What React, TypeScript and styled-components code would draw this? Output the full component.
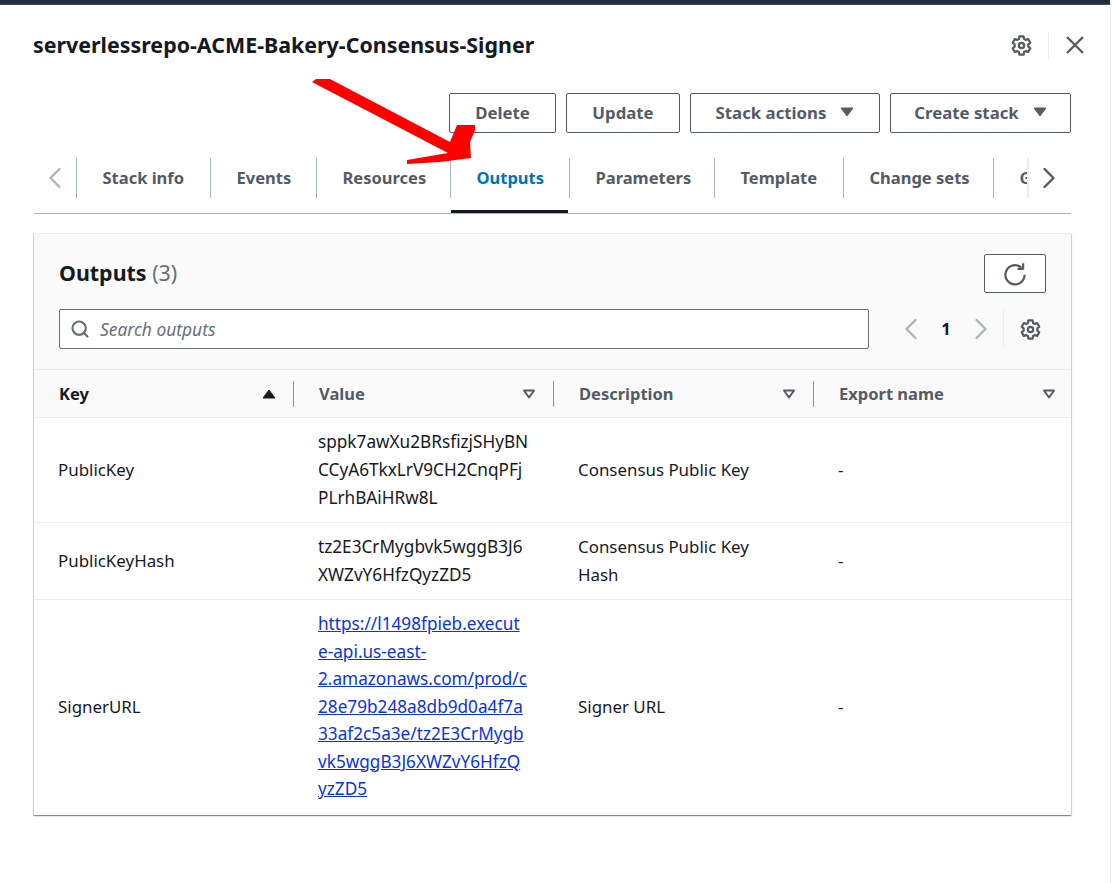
import React from "react";
import styled, { createGlobalStyle } from "styled-components";
import { ChevronLeft, ChevronRight, Search } from "lucide-react";

const GlobalStyle = createGlobalStyle`
  body {
    margin: 0;
    background: #fff;
    font-family: "Noto Sans", "Open Sans", sans-serif;
    color: #16191f;
  }
`;

const Page = styled.div`
  position: relative;
  width: 1111px;
  height: 883px;
  box-sizing: border-box;
  border-right: 1px solid #eaeded;
  overflow: hidden;
`;

const TopBar = styled.div`
  height: 4px;
  background: #232f3e;
  border-bottom: 1px solid #414d5c;
`;

const Drawer = styled.div`
  padding: 0 39px 0 34px;
`;

const Header = styled.div`
  display: flex;
  align-items: center;
  justify-content: space-between;
  height: 80px;
`;

const Title = styled.h1`
  margin: 0 0 0 -1px;
  font-size: 21.4px;
  font-weight: 700;
  line-height: 28px;
  white-space: nowrap;
`;

const HeaderTools = styled.div`
  display: flex;
  align-items: center;
  margin-right: -14px;
  color: #545b64;
`;

const HeaderDivider = styled.div`
  width: 1px;
  height: 28px;
  margin: 0 16px;
  background: #eaeded;
`;

const Actions = styled.div`
  display: flex;
  justify-content: flex-end;
  gap: 10px;
  margin-top: 8px;
`;

const Button = styled.button<{ $width: number }>`
  display: flex;
  align-items: center;
  justify-content: center;
  gap: 14px;
  width: ${(p) => p.$width}px;
  height: 40px;
  padding: 0 0 2px;
  background: #fff;
  border: 1px solid #545b64;
  border-radius: 2px;
  color: #545b64;
  font-family: inherit;
  font-size: 16.8px;
  font-weight: 700;
`;

const TabBar = styled.div`
  display: flex;
  align-items: flex-start;
  height: 55px;
  margin-top: 25px;
  border-bottom: 1px solid #aab7b8;
`;

const TabArrow = styled.div<{ $width: number; $next?: boolean }>`
  display: flex;
  justify-content: center;
  align-items: center;
  flex: none;
  box-sizing: border-box;
  width: ${(p) => p.$width}px;
  height: 40px;
  padding-right: ${(p) => (p.$next ? 2 : 0)}px;
  border-left: ${(p) => (p.$next ? "2px solid #ececec" : "none")};
`;

const TabList = styled.div`
  display: flex;
  flex: 1;
  min-width: 0;
  overflow: hidden;
`;

const Tab = styled.div<{ $active?: boolean; $width: number }>`
  position: relative;
  flex: none;
  box-sizing: border-box;
  width: ${(p) => p.$width}px;
  height: 55px;
  &::after {
    content: "";
    display: ${(p) => (p.$active ? "block" : "none")};
    position: absolute;
    left: 1px;
    right: 1px;
    bottom: 0;
    height: 3px;
    background: #16191f;
  }
`;

const TabLabel = styled.div<{ $active?: boolean }>`
  display: flex;
  align-items: center;
  box-sizing: border-box;
  height: 40px;
  padding: 0 0 2px 25.5px;
  border-left: 1px solid #aab7b8;
  color: ${(p) => (p.$active ? "#0073bb" : "#545b64")};
  font-size: 16.5px;
  font-weight: 700;
  white-space: nowrap;
`;

const Panel = styled.section`
  margin-top: 19px;
  border-top: 1px solid #eaeded;
  box-shadow: 0 1px 1px 0 rgba(0, 28, 36, 0.3),
    1px 1px 1px 0 rgba(0, 28, 36, 0.15), -1px 1px 1px 0 rgba(0, 28, 36, 0.15);
`;

const PanelHead = styled.div`
  display: flex;
  flex-direction: column;
  gap: 16px;
  padding: 20px 25px;
  background: #fafafa;
  border-bottom: 1px solid #eaeded;
`;

const HeadRow = styled.div`
  display: flex;
  align-items: center;
  justify-content: space-between;
`;

const PanelTitle = styled.h2`
  margin: 0;
  padding-bottom: 2px;
  font-size: 21.4px;
  font-weight: 700;
  line-height: 28px;
`;

const Counter = styled.span`
  color: #687078;
  font-weight: 400;
`;

const RefreshButton = styled.button`
  display: flex;
  align-items: center;
  justify-content: center;
  width: 62px;
  height: 39px;
  padding: 0;
  background: #fff;
  border: 1px solid #545b64;
  border-radius: 2px;
  color: #545b64;
`;

const SearchBox = styled.div`
  display: flex;
  align-items: center;
  gap: 10px;
  width: 810px;
  height: 40px;
  box-sizing: border-box;
  padding: 0 10px;
  background: #fff;
  border: 1px solid #687078;
  border-radius: 2px;
  color: #687078;
`;

const SearchText = styled.span`
  padding-bottom: 1px;
  font-size: 17.4px;
  font-style: italic;
  color: #687078;
`;

const Pager = styled.div`
  display: flex;
  align-items: center;
  height: 40px;
`;

const PagerNumber = styled.span`
  width: 34px;
  padding-bottom: 1px;
  text-align: center;
  font-size: 16.5px;
  font-weight: 700;
`;

const PagerDivider = styled.div`
  width: 1px;
  height: 40px;
  margin: 0 16px 0 4px;
  background: #eaeded;
`;

const PagerGear = styled.span`
  display: flex;
  margin-right: 5px;
  color: #545b64;
`;

const Table = styled.table`
  width: 100%;
  table-layout: fixed;
  border-collapse: collapse;
`;

const HeadCell = styled.th`
  height: 47px;
  padding: 0;
  background: #fafafa;
  border-bottom: 1px solid #eaeded;
  text-align: left;
  &:not(:last-child) {
    width: 260px;
  }
`;

const HeadInner = styled.div<{ $last?: boolean; $sorted?: boolean }>`
  display: flex;
  align-items: center;
  justify-content: space-between;
  height: 26px;
  padding: 0 ${(p) => (p.$last ? 14 : 17)}px 0 25px;
  border-right: 1px solid ${(p) => (p.$last ? "transparent" : "#879596")};
  color: ${(p) => (p.$sorted ? "#16191f" : "#545b64")};
  font-size: 16.5px;
  font-weight: 700;
`;

const Cell = styled.td`
  padding: 10px 26px 10px 24px;
  border-bottom: 1px solid #eaeded;
  font-size: 16.9px;
  line-height: 28px;
  color: #16191f;
  tr:last-child & {
    border-bottom: none;
  }
`;

const ValueCell = styled(Cell)`
  font-size: 17.2px;
`;

const ValueLink = styled.a`
  display: block;
  margin-bottom: 2px;
  line-height: 27.5px;
  color: #0a32e6;
  text-decoration: underline;
  white-space: nowrap;
`;

const ArrowOverlay = styled.svg`
  position: absolute;
  left: 300px;
  top: 70px;
  pointer-events: none;
`;

const Gear = () => (
  <svg width="21" height="21" viewBox="0 0 16 16" fill="none" stroke="currentColor" strokeWidth="1.7" strokeLinejoin="round">
    <path d="M6.4 1.1h3.2l.4 1.9 1.2.7 1.9-.6 1.6 2.8-1.5 1.3v1.6l1.5 1.3-1.6 2.8-1.9-.6-1.2.7-.4 1.9H6.4L6 13l-1.2-.7-1.9.6-1.6-2.8 1.5-1.3V7.2L1.3 5.9l1.6-2.8 1.9.6L6 3z" />
    <circle cx="8" cy="8" r="2" />
  </svg>
);

const Close = () => (
  <svg width="20" height="20" viewBox="0 0 20 20" fill="none" stroke="currentColor" strokeWidth="2.4">
    <path d="M2 2l16 16M18 2L2 18" />
  </svg>
);

const Refresh = () => (
  <svg width="24" height="24" viewBox="0 0 16 16" fill="none" stroke="currentColor" strokeWidth="1.5">
    <path d="M14.4 8.5A6.4 6.4 0 1 1 12.2 3.7" />
    <path d="M13.4 .8v3.7H9.7" strokeLinejoin="round" />
  </svg>
);

const CaretDown = () => (
  <svg width="14" height="10" viewBox="0 0 14 10">
    <path d="M1 1h12L7 9z" fill="currentColor" stroke="currentColor" strokeLinejoin="round" />
  </svg>
);

const SortIcon = ({ sorted }: { sorted?: boolean }) =>
  sorted ? (
    <svg width="14" height="10" viewBox="0 0 14 10" color="#16191f">
      <path d="M1 9h12L7 1z" fill="currentColor" stroke="currentColor" strokeLinejoin="round" />
    </svg>
  ) : (
    <svg width="14" height="10" viewBox="0 0 14 10" color="#545b64">
      <path d="M2 1.5h10L7 8.5z" fill="none" stroke="currentColor" strokeWidth="2" strokeLinejoin="round" />
    </svg>
  );

const tabs = [
  { label: "Stack info", width: 134 },
  { label: "Events", width: 106 },
  { label: "Resources", width: 134 },
  { label: "Outputs", width: 119 },
  { label: "Parameters", width: 145 },
  { label: "Template", width: 129 },
  { label: "Change sets", width: 150 },
  { label: "Git sync", width: 110 },
];
const columns = ["Key", "Value", "Description", "Export name"];

const rows = [
  {
    key: "PublicKey",
    value: ["sppk7awXu2BRsfizjSHyBN", "CCyA6TkxLrV9CH2CnqPFj", "PLrhBAiHRw8L"],
    description: "Consensus Public Key",
  },
  {
    key: "PublicKeyHash",
    value: ["tz2E3CrMygbvk5wggB3J6", "XWZvY6HfzQyzZD5"],
    description: "Consensus Public Key Hash",
  },
  {
    key: "SignerURL",
    value: [
      "https://l1498fpieb.execut",
      "e-api.us-east-",
      "2.amazonaws.com/prod/c",
      "28e79b248a8db9d0a4f7a",
      "33af2c5a3e/tz2E3CrMygb",
      "vk5wggB3J6XWZvY6HfzQ",
      "yzZD5",
    ],
    description: "Signer URL",
    link: true,
  },
];

const Lines = ({ lines }: { lines: string[] }) => (
  <>
    {lines.map((line, i) => (
      <React.Fragment key={line}>
        {i > 0 && <br />}
        {line}
      </React.Fragment>
    ))}
  </>
);

const App = () => {
  return (
    <Page>
      <GlobalStyle />
      <TopBar />
      <Drawer>
        <Header>
          <Title>serverlessrepo-ACME-Bakery-Consensus-Signer</Title>
          <HeaderTools>
            <Gear />
            <HeaderDivider />
            <Close />
          </HeaderTools>
        </Header>
        <Actions>
          <Button $width={107}>Delete</Button>
          <Button $width={114}>Update</Button>
          <Button $width={190}>
            Stack actions <CaretDown />
          </Button>
          <Button $width={181}>
            Create stack <CaretDown />
          </Button>
        </Actions>
        <TabBar>
          <TabArrow $width={42}>
            <ChevronLeft size={36} strokeWidth={1.6} color="#aab7b8" />
          </TabArrow>
          <TabList>
            {tabs.map((tab) => (
              <Tab key={tab.label} $width={tab.width} $active={tab.label === "Outputs"}>
                <TabLabel $active={tab.label === "Outputs"}>{tab.label}</TabLabel>
              </Tab>
            ))}
          </TabList>
          <TabArrow $width={44} $next>
            <ChevronRight size={36} strokeWidth={1.6} color="#545b64" />
          </TabArrow>
        </TabBar>
        <Panel>
          <PanelHead>
            <HeadRow>
              <PanelTitle>
                Outputs <Counter>(3)</Counter>
              </PanelTitle>
              <RefreshButton>
                <Refresh />
              </RefreshButton>
            </HeadRow>
            <HeadRow>
              <SearchBox>
                <Search size={20} strokeWidth={2.6} />
                <SearchText>Search outputs</SearchText>
              </SearchBox>
              <Pager>
                <ChevronLeft size={36} strokeWidth={1.6} color="#aab7b8" />
                <PagerNumber>1</PagerNumber>
                <ChevronRight size={36} strokeWidth={1.6} color="#aab7b8" />
                <PagerDivider />
                <PagerGear>
                  <Gear />
                </PagerGear>
              </Pager>
            </HeadRow>
          </PanelHead>
          <Table>
            <thead>
              <tr>
                {columns.map((col, i) => (
                  <HeadCell key={col}>
                    <HeadInner $sorted={i === 0} $last={i === columns.length - 1}>
                      {col}
                      <SortIcon sorted={i === 0} />
                    </HeadInner>
                  </HeadCell>
                ))}
              </tr>
            </thead>
            <tbody>
              {rows.map((row) => (
                <tr key={row.key}>
                  <Cell>{row.key}</Cell>
                  <ValueCell>
                    {row.link ? (
                      <ValueLink href="#">
                        <Lines lines={row.value} />
                      </ValueLink>
                    ) : (
                      <Lines lines={row.value} />
                    )}
                  </ValueCell>
                  <Cell>{row.description}</Cell>
                  <Cell>-</Cell>
                </tr>
              ))}
            </tbody>
          </Table>
        </Panel>
      </Drawer>
      <ArrowOverlay width="190" height="100" viewBox="300 70 190 100">
        <path
          d="M312 82 L316 79 L330 79 L450 142 L457 125 L475 125 L475 130 L470 142 L471 158 L440 162 L407 164 L407 160 L448 153 Z"
          fill="#ff0000"
        />
      </ArrowOverlay>
    </Page>
  );
};

export default App;
